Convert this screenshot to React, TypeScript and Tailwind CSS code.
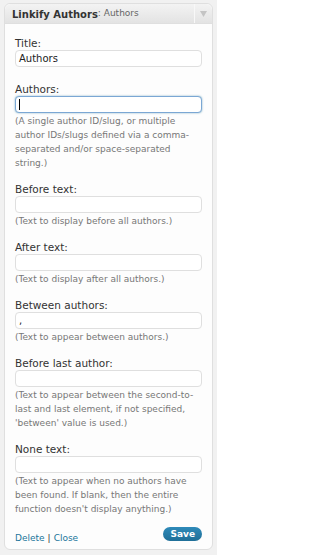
import React from 'react'

type Field = {
  label: string
  value?: string
  help?: string
  focused?: boolean
}

const fields: Field[] = [
  { label: 'Title:', value: 'Authors' },
  {
    label: 'Authors:',
    value: '',
    focused: true,
    help: '(A single author ID/slug, or multiple author IDs/slugs defined via a comma-separated and/or space-separated string.)',
  },
  { label: 'Before text:', help: '(Text to display before all authors.)' },
  { label: 'After text:', help: '(Text to display after all authors.)' },
  { label: 'Between authors:', value: ',', help: '(Text to appear between authors.)' },
  {
    label: 'Before last author:',
    help: "(Text to appear between the second-to-last and last element, if not specified, 'between' value is used.)",
  },
  {
    label: 'None text:',
    help: "(Text to appear when no authors have been found. If blank, then the entire function doesn't display anything.)",
  },
]

function FieldRow({ field }: { field: Field }) {
  return (
    <div className={field.help ? 'mb-[13px]' : 'mb-[16px]'}>
      <div className="text-[10.5px] leading-[13px] text-[#333]">{field.label}</div>
      <div
        className={`h-[17px] rounded-[4px] border bg-white px-[3px] text-[10px] leading-[15px] text-[#222] ${
          field.focused ? 'border-[#7ba7d4] shadow-[0_0_2px_rgba(33,117,155,0.6)]' : 'border-[#dfdfdf]'
        }`}
      >
        {field.focused ? <span className="inline-block h-[11px] w-px translate-y-[2px] bg-black" /> : field.value}
      </div>
      {field.help && <p className="mt-[1px] text-[9px] leading-[14px] text-[#777]">{field.help}</p>}
    </div>
  )
}

export default function App() {
  return (
    <div className="min-h-[555px] w-[217px] bg-[#f1f1f1] pt-[3px] font-['DejaVu_Sans',sans-serif]">
      <div className="mx-[4px] rounded-[6px] border border-[#dfdfdf] bg-[#fdfdfd]">
        {/* header */}
        <div className="flex h-[20px] items-stretch rounded-t-[6px] border-b border-[#dfdfdf] bg-gradient-to-b from-[#f3f3f3] to-[#e3e3e3]">
          <div className="flex flex-1 items-center pt-[1px] pl-[7px] text-[10px]">
            <span className="font-bold text-[#333]">Linkify Authors</span>
            <span className="text-[9px] text-[#666]">: Authors</span>
          </div>
          <div className="flex w-[18px] items-center justify-center border-l border-[#f8f8f8]">
            <svg width="7" height="6" viewBox="0 0 7 6">
              <path d="M0 0h7L3.5 6z" fill="#c4c4c4" />
            </svg>
          </div>
        </div>

        {/* form */}
        <div className="px-[10px] pt-[13px] pb-[4px]">
          {fields.map((f) => (
            <FieldRow key={f.label} field={f} />
          ))}

          <div className="-mt-[2px] flex items-start justify-between">
            <div className="pt-[4px] text-[9px] leading-[14px] text-[#21759b]">
              <span>Delete</span>
              <span className="mx-[3px] text-[#333]">|</span>
              <span>Close</span>
            </div>
            <button className="h-[14px] rounded-full bg-gradient-to-b from-[#2e8ab9] to-[#1f6f98] px-[7px] text-[9px] font-bold leading-[14px] text-white">
              Save
            </button>
          </div>
        </div>
      </div>
    </div>
  )
}
